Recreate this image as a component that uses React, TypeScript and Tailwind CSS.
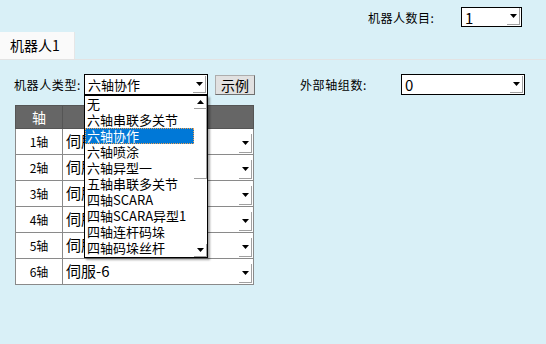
import React from 'react';

const font = { fontFamily: '"Microsoft YaHei", "Noto Sans CJK SC", "Noto Sans", sans-serif' };

const Arrow: React.FC<{ h?: string }> = ({ h = 'h-full' }) => (
  <span className={`flex w-[13px] ${h} items-center justify-center border-r border-b border-[#a0a0a0]`}>
    <svg width="7" height="4" viewBox="0 0 7 4">
      <polygon points="0,0 7,0 3.5,4" fill="#000" />
    </svg>
  </span>
);

const Select: React.FC<{ value: string; className: string; text?: string }> = ({ value, className, text = 'text-[14px]' }) => (
  <div className={`flex items-stretch bg-white border border-black ${className}`}>
    <span className={`flex-1 pl-[3px] leading-none flex items-center ${text}`}>{value}</span>
    <span className="flex items-end pr-[1px] pb-[1px]">
      <Arrow h="h-[17px]" />
    </span>
  </div>
);

const options = ['无', '六轴串联多关节', '六轴协作', '六轴喷涂', '六轴异型一', '五轴串联多关节', '四轴SCARA', '四轴SCARA异型1', '四轴连杆码垛', '四轴码垛丝杆'];

export default function App() {
  return (
    <div className="w-[546px] h-[344px] bg-[#d9f0f7] text-black relative overflow-hidden" style={font}>
      <div className="flex justify-end pt-[7px] pr-[24px] h-[32px] items-start">
        <span className="text-[12px] w-[93px] tracking-[0.5px] mt-[2px]">机器人数目:</span>
        <Select value="1" className="w-[61px] h-[20px]" text="text-[15px]" />
      </div>
      <div className="flex border-b border-[#e3e3e3] h-[28px]">
        <div className="w-[75px] bg-[#fafafa] border-r border-[#e6e6e6] text-[14px] pl-[10px] flex items-center">机器人1</div>
      </div>
      <div className="flex items-center mt-[14px] h-[21px]">
        <span className="text-[12px] ml-[14px] w-[70px] tracking-[0.6px]">机器人类型:</span>
        <Select value="六轴协作" className="w-[124px] h-[21px]" text="text-[13px]" />
        <button className="ml-[7px] w-[40px] h-[20px] bg-[#e1e1e1] border border-[#adadad] border-r-[#707070] border-b-[#707070] text-[14px] leading-none flex items-center justify-center">示例</button>
        <span className="text-[12px] ml-[45px] w-[101px] tracking-[0.6px]">外部轴组数:</span>
        <Select value="0" className="w-[124px] h-[21px]" text="text-[15px]" />
      </div>
      <table className="ml-[15px] mt-[10px] border-collapse w-[239px] text-[12px]">
        <thead>
          <tr className="h-[23px] bg-[#666666] text-white">
            <th className="w-[47px] font-normal text-[14px] border border-[#555]">轴</th>
            <th className="font-normal border border-[#555]"></th>
          </tr>
        </thead>
        <tbody>
          {[1, 2, 3, 4, 5, 6].map((n) => (
            <tr key={n} className="h-[26px] bg-white">
              <td className="border border-[#8a8a8a] text-center">{n}轴</td>
              <td className="border border-[#8a8a8a] p-0">
                <div className="flex h-[25px] items-stretch">
                  <span className="flex-1 pl-[3px] text-[15px] flex items-center">伺服-{n}</span>
                  <span className="flex items-end pb-[1px] pr-[1px]"><Arrow h="h-[19px]" /></span>
                </div>
              </td>
            </tr>
          ))}
        </tbody>
      </table>
      <div className="absolute left-[84px] top-[95px] w-[124px] h-[163px] bg-white border border-black shadow-[2px_2px_2px_rgba(0,0,0,0.35)] flex">
        <div className="flex-1 flex flex-col">
          {options.map((o) => (
            <div
              key={o}
              className={`h-[16px] pl-[2px] text-[13px] leading-[16px] whitespace-nowrap ${o === '六轴协作' ? 'bg-[#0078d7] text-white outline outline-1 outline-dotted outline-[#f0a050] -outline-offset-1' : ''}`}
            >
              {o}
            </div>
          ))}
        </div>
        <div className="w-[13px] flex flex-col">
          <div className="h-[13px] flex items-center justify-center border-r border-b border-[#a0a0a0]">
            <svg width="7" height="4" viewBox="0 0 7 4"><polygon points="3.5,0 7,4 0,4" fill="#000" /></svg>
          </div>
          <div className="h-[70px] border-r border-b border-[#a0a0a0]" />
          <div className="flex-1" />
          <div className="h-[13px] flex items-center justify-center border-r border-b border-[#a0a0a0]">
            <svg width="7" height="4" viewBox="0 0 7 4"><polygon points="0,0 7,0 3.5,4" fill="#000" /></svg>
          </div>
        </div>
      </div>
    </div>
  );
}
